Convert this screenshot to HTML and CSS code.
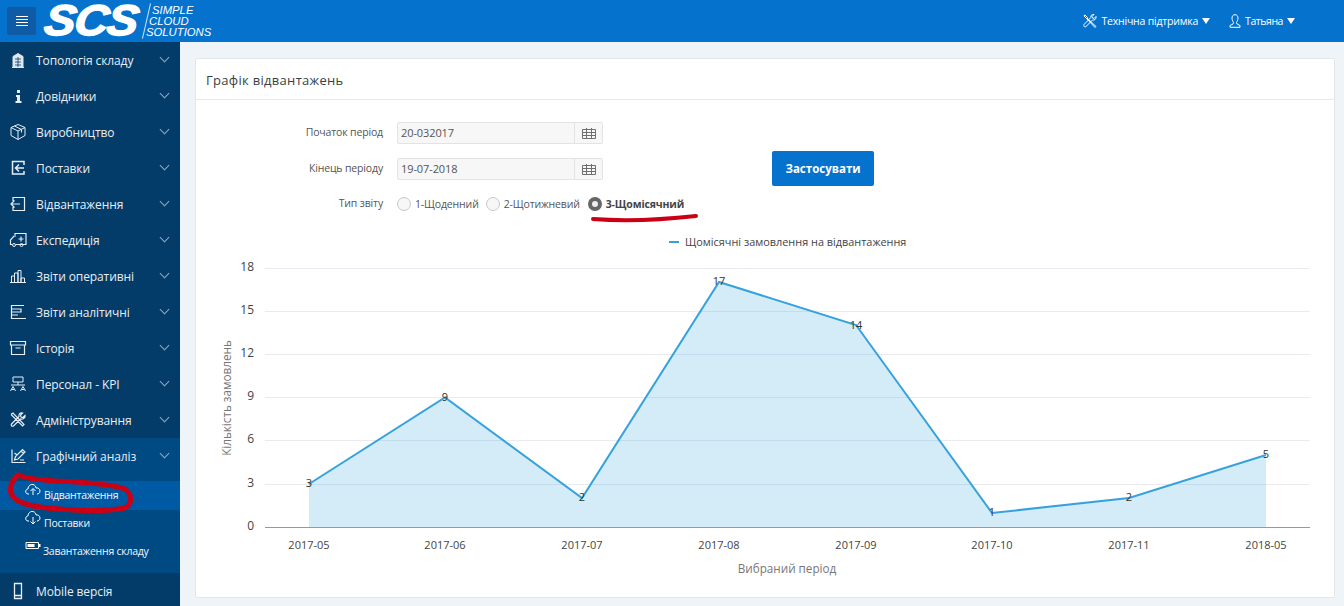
FILE: index.html
```html
<!doctype html>
<html lang="uk">
<head>
  <meta charset="UTF-8">
  <title>Графік відвантажень</title>
  <link rel="stylesheet" href="styles.css">
</head>
<body>
<header class="top-bar">
  <button class="menu-toggle" type="button" aria-label="Меню">
    <svg width="12" height="10" viewBox="0 0 12 10"><path d="M0 .5h12M0 3.5h12M0 6.5h12M0 9.5h12" stroke="#fff" fill="none"/></svg>
  </button>
  <div class="logo">
    <span class="logo-mark">SCS</span>
    <span class="logo-slash"></span>
    <span class="logo-text">
      <span class="logo-line-1">SIMPLE</span>
      <span class="logo-line-2">CLOUD</span>
      <span class="logo-line-3">SOLUTIONS</span>
    </span>
  </div>
  <nav class="top-links">
    <a class="top-link">
      <svg class="top-icon" width="14" height="14" viewBox="0 0 14 14"><path d="M1 1.500l1-.5 2.500 2.500-1 1L1 2zM4 4l9 8.500-1 1L3.500 4.500M13 2.500l-2 2-1.500-.5-.5-1.500 2-2C9 .2 7.500 1.500 7.800 3.500L1 10.500c-.5 1 0 2.500 1.500 2.500L9.500 6c2 .5 4-1 3.500-3.500z" stroke="#fff" fill="none"/></svg>
      Технічна підтримка <span class="caret"></span>
    </a>
    <a class="top-link top-link-user">
      <svg class="top-icon" width="12" height="14" viewBox="0 0 12 14"><path d="M6 .7c2 0 3 1.500 3 3.500S8 7.500 7.500 8.500l.5 1.500 3 1.500v1.800H1v-1.800L4 10l.5-1.500C4 7.500 3 6.200 3 4.200S4 .7 6 .7z" stroke="#fff" fill="none"/></svg>
      Татьяна <span class="caret"></span>
    </a>
  </nav>
</header>

<div class="layout">
  <aside class="sidebar">
    <a class="nav-item">
      <svg class="nav-icon" viewBox="0 0 18 18"><path d="M4 16V5.500l5-3 5 3V16zM3 16.500h12" fill="#dfe7ee" stroke="#dfe7ee"/><path d="M6 8h6M6 11h6M6 14h6M9 6v10" stroke="#033c69" stroke-width=".8" fill="none"/></svg>
      <span class="nav-label">Топологія складу</span><span class="chevron"></span>
    </a>
    <a class="nav-item">
      <svg class="nav-icon" viewBox="0 0 18 18"><path d="M8 3h3v3H8zM7 8h4v6h1.500v2h-6v-2H8v-4H7z" fill="#e8eef4"/></svg>
      <span class="nav-label">Довідники</span><span class="chevron"></span>
    </a>
    <a class="nav-item">
      <svg class="nav-icon" viewBox="0 0 18 18"><path d="M9 1.500l7 3v8l-7 4-7-4v-8zM2 4.500l7 3.500 7-3.500M9 8v8.500M5.500 3l7 3.500v3" stroke="#e8eef4" fill="none"/></svg>
      <span class="nav-label">Виробництво</span><span class="chevron"></span>
    </a>
    <a class="nav-item">
      <svg class="nav-icon" viewBox="0 0 18 18"><path d="M15 6V2.500H3.500v12.500H15v-3M15 9H7M10 5.500L6.500 9l3.500 3.500" stroke="#e8eef4" stroke-width="1.500" fill="none"/></svg>
      <span class="nav-label">Поставки</span><span class="chevron"></span>
    </a>
    <a class="nav-item">
      <svg class="nav-icon" viewBox="0 0 18 18"><path d="M4 6V2.500h11.500v13H4v-3.500M11 9H2M5.500 5.500L2 9l3.500 3.500" stroke="#e8eef4" stroke-width="1.200" fill="none"/></svg>
      <span class="nav-label">Відвантаження</span><span class="chevron"></span>
    </a>
    <a class="nav-item">
      <svg class="nav-icon" viewBox="0 0 18 18"><path d="M6 4V2.500h11v11H7M3 13.500H1.500V9L5 5h2M9.500 8h5M12 5.500v5" stroke="#e8eef4" stroke-width="1.200" fill="none"/><circle cx="5" cy="14" r="1.500" stroke="#e8eef4" fill="none"/><circle cx="12.500" cy="14" r="1.500" stroke="#e8eef4" fill="none"/></svg>
      <span class="nav-label">Експедиція</span><span class="chevron"></span>
    </a>
    <a class="nav-item">
      <svg class="nav-icon" viewBox="0 0 18 18"><path d="M2.500 15V9h3v6M5.500 15V6h3.500v9M9 15V3.500h3V15M12 15v-4h3.500v4M1 15.500h16" stroke="#e8eef4" fill="none"/></svg>
      <span class="nav-label">Звіти оперативні</span><span class="chevron"></span>
    </a>
    <a class="nav-item">
      <svg class="nav-icon" viewBox="0 0 18 18"><path d="M2.500 16V2.500H15M3 6h9v3H3M3 12h6M3 15.500h14" stroke="#e8eef4" stroke-width="1.200" fill="none"/></svg>
      <span class="nav-label">Звіти аналітичні</span><span class="chevron"></span>
    </a>
    <a class="nav-item">
      <svg class="nav-icon" viewBox="0 0 18 18"><path d="M1.500 2.500h15v3.500h-15zM2.500 6v9.500h13V6M6.500 9h5" stroke="#e8eef4" stroke-width="1.200" fill="none"/></svg>
      <span class="nav-label">Історія</span><span class="chevron"></span>
    </a>
    <a class="nav-item">
      <svg class="nav-icon" viewBox="0 0 18 18"><path d="M4 2h10v5H4zM2 10h14M1.500 16l2.500-4.500L6.500 16M3 14.500h2M11.500 16l2.500-4.500 2.500 4.500M13 14.500h2M9 7v3" stroke="#e8eef4" fill="none"/></svg>
      <span class="nav-label">Персонал - KPI</span><span class="chevron"></span>
    </a>
    <a class="nav-item">
      <svg class="nav-icon" viewBox="0 0 18 18"><path d="M2.500 3L4 2l11 11.500-1.500 1.500L2.500 4zM16 4.500l-2 2-2-.5-.5-2 2-2c-2.500-.5-4 1-3.500 3.500L2.500 13c-.8 1.200.3 2.800 2 2l7-7c2.500.5 5-1 4.500-3.500z" stroke="#e8eef4" stroke-width="1.200" fill="none"/></svg>
      <span class="nav-label">Адміністрування</span><span class="chevron"></span>
    </a>
    <div class="nav-group">
      <a class="nav-item">
        <svg class="nav-icon" viewBox="0 0 18 18"><path d="M3 2.500v13h13.500M5.500 13l1-3.500 7-7 2.500 2.500-7 7zM12 4l2.500 2.500M5.500 6L8 8M11 13l4-.0" stroke="#e8eef4" stroke-width="1.200" fill="none"/></svg>
        <span class="nav-label">Графічний аналіз</span><span class="chevron"></span>
      </a>
      <ul class="sub-nav">
        <li class="sub-item sub-item-active">
          <svg class="sub-icon" viewBox="0 0 16 14"><path d="M4 11H3C1 11 .5 9 .8 8 1 6.500 2 6 3 6c0-3 2.500-5 5-4.500C10 2 11 3.500 11 5c2-.5 4 1 4 3s-1.500 3-3 3M8 12V6M5.500 8L8 5.500 10.500 8" stroke="#fff" fill="none"/></svg>
          <span>Відвантаження</span>
        </li>
        <li class="sub-item">
          <svg class="sub-icon" viewBox="0 0 16 14"><path d="M4 10H3C1 10 .5 8 .8 7 1 5.500 2 5 3 5c0-3 2.500-5 5-4.500C10 1 11 2.500 11 4c2-.5 4 1 4 3s-1.500 3-3 3M8 6v7M5.500 10.500L8 13l2.500-2.500" stroke="#fff" fill="none"/></svg>
          <span>Поставки</span>
        </li>
        <li class="sub-item">
          <svg class="sub-icon" viewBox="0 0 16 14"><path d="M1 3.500h12.500v6H1z" stroke="#fff" fill="none"/><path d="M2.500 5h7v3h-7zM14 5h1.500v3H14z" fill="#fff"/></svg>
          <span>Завантаження складу</span>
        </li>
      </ul>
    </div>
    <a class="nav-item">
      <svg class="nav-icon" viewBox="0 0 18 18"><path d="M5.500 1.500h7v15h-7zM6 13.500h6" stroke="#e8eef4" stroke-width="1.300" fill="none"/></svg>
      <span class="nav-label">Mobile версія</span>
    </a>
  </aside>

  <main class="content">
    <section class="card">
      <h1 class="card-title">Графік відвантажень</h1>
      <div class="card-body">
        <div class="filter">
          <form class="filter-form">
            <label class="filter-label">Початок період</label>
            <div class="date-field">
              <span class="date-input">20-032017</span>
              <span class="date-addon">
                <svg width="14" height="12" viewBox="0 0 14 12"><path d="M.5 2.500h13v9H.5zM.5 5.500h13M.5 8.500h13M4.500 1v10.500M9.500 1v10.500" stroke="#6f6f6f" fill="none"/></svg>
              </span>
            </div>
            <label class="filter-label">Кінець періоду</label>
            <div class="date-field">
              <span class="date-input">19-07-2018</span>
              <span class="date-addon">
                <svg width="14" height="12" viewBox="0 0 14 12"><path d="M.5 2.500h13v9H.5zM.5 5.500h13M.5 8.500h13M4.500 1v10.500M9.500 1v10.500" stroke="#6f6f6f" fill="none"/></svg>
              </span>
            </div>
            <label class="filter-label">Тип звіту</label>
            <div class="radio-row">
              <span class="radio"><i class="radio-dot"></i>1-Щоденний</span>
              <span class="radio"><i class="radio-dot"></i>2-Щотижневий</span>
              <span class="radio radio-checked"><i class="radio-dot"></i>3-Щомісячний</span>
            </div>
          </form>
          <button class="apply-btn" type="button">Застосувати</button>
        </div>

        <svg class="chart" viewBox="196 230 1138 367" width="1138" height="367">
          <path d="M669 242h10" stroke="#36a2dd" stroke-width="2"/>
          <text x="685" y="246" class="chart-legend">Щомісячні замовлення на відвантаження</text>

          <path d="M265 268.500h1045M265 311.500h1045M265 354.500h1045M265 397.500h1045M265 440.500h1045M265 484.500h1045" stroke="#e9ebf1"/>
          <path d="M309 484L445 397.500 582 498 719 282 856 325 992 513 1129 498 1266 455V527H309z" fill="#36a2dd" fill-opacity=".21"/>
          <path d="M309 484L445 397.500 582 498 719 282 856 325 992 513 1129 498 1266 455" fill="none" stroke="#36a2dd" stroke-width="2"/>
          <path d="M265 527.500h1045" stroke="#999"/>

          <g class="chart-axis-y">
            <text x="254" y="271">18</text>
            <text x="254" y="314">15</text>
            <text x="254" y="357">12</text>
            <text x="254" y="400">9</text>
            <text x="254" y="443">6</text>
            <text x="254" y="487">3</text>
            <text x="254" y="530">0</text>
          </g>
          <g class="chart-axis-x">
            <text x="309" y="549">2017-05</text>
            <text x="445" y="549">2017-06</text>
            <text x="582" y="549">2017-07</text>
            <text x="719" y="549">2017-08</text>
            <text x="856" y="549">2017-09</text>
            <text x="992" y="549">2017-10</text>
            <text x="1129" y="549">2017-11</text>
            <text x="1266" y="549">2018-05</text>
          </g>
          <g class="chart-values">
            <text x="309" y="487">3</text>
            <text x="445" y="401">9</text>
            <text x="582" y="501">2</text>
            <text x="719" y="285">17</text>
            <text x="856" y="329">14</text>
            <text x="992" y="516">1</text>
            <text x="1129" y="501">2</text>
            <text x="1266" y="458">5</text>
          </g>
          <text class="chart-title" x="787" y="573">Вибраний період</text>
          <text class="chart-title" transform="translate(231 398) rotate(-90)">Кількість замовлень</text>
        </svg>
      </div>
    </section>
  </main>
</div>

<svg class="marks" width="1344" height="606" viewBox="0 0 1344 606">
  <path d="M18 475C10 482 8 492 14 498 22 505 40 508 60 509 85 511 110 511 125 508 133 503 132 494 125 489 112 484 80 482 55 481 40 480 28 479 18 475z" fill="none" stroke="#cc0014" stroke-width="5"/>
  <path d="M593 219C620 221 660 220 696 216" fill="none" stroke="#cc0014" stroke-width="4" stroke-linecap="round"/>
</svg>
</body>
</html>
```

FILE: styles.css
```css
* {
  box-sizing: border-box;
}

html,
body {
  height: 100%;
}

body {
  margin: 0;
  overflow: hidden;
  font-family: "Open Sans", "Noto Sans", sans-serif;
  font-size: 12px;
  color: #444;
  background: #eff4f9;
}

/* top bar */
.top-bar {
  display: flex;
  align-items: center;
  height: 42px;
  padding: 0 49px 0 7px;
  background: #0572ce;
  color: #fff;
}

.menu-toggle {
  display: flex;
  align-items: center;
  justify-content: center;
  width: 29px;
  height: 28px;
  padding: 0;
  border: 0;
  border-radius: 2px;
  background: #0f5ba5;
}

.logo {
  display: flex;
  align-items: center;
  height: 42px;
  margin-left: 7px;
}

.logo-mark {
  display: block;
  width: 96px;
  font-family: "Liberation Sans", sans-serif;
  font-size: 36px;
  font-weight: 700;
  font-style: italic;
  line-height: 42px;
  letter-spacing: -1px;
  -webkit-text-stroke: 1.2px #fff;
  transform: translateX(2px) scale(1.3, 1.19) skewX(-8deg);
  transform-origin: left center;
}

.logo-slash {
  display: block;
  width: 1px;
  height: 36px;
  margin-left: 7px;
  background: #cfe3f5;
  transform: rotate(13deg);
}

.logo-text {
  display: flex;
  flex-direction: column;
  margin-left: -1px;
  font-family: "Liberation Sans", sans-serif;
  font-size: 11.300px;
  font-style: italic;
  line-height: 11px;
}

.logo-line-1 {
  padding-left: 6px;
}

.logo-line-2 {
  padding-left: 3px;
}

.top-links {
  display: flex;
  margin-left: auto;
  font-size: 10.500px;
  letter-spacing: -.2px;
}

.top-link {
  display: flex;
  align-items: center;
  gap: 4px;
}

.top-link-user {
  margin-left: 19px;
  letter-spacing: -.45px;
}

.caret {
  width: 0;
  height: 0;
  border-left: 4px solid transparent;
  border-right: 4px solid transparent;
  border-top: 6px solid #fff;
}

/* sidebar */
.layout {
  display: flex;
  height: 564px;
}

.sidebar {
  flex: none;
  width: 180px;
  background: #033c69;
  color: #e8eef4;
}

.nav-item {
  display: flex;
  align-items: center;
  height: 36px;
  padding: 0 9px 0 9px;
  font-size: 12px;
  font-weight: 500;
  letter-spacing: -.1px;
}

.nav-icon {
  flex: none;
  width: 18px;
  height: 18px;
  margin-right: 9px;
}

.nav-label {
  flex: 1;
  white-space: nowrap;
}

.chevron {
  width: 7px;
  height: 7px;
  margin: -5px 3px 0 0;
  border-right: 1.500px solid #8fa9c0;
  border-bottom: 1.500px solid #8fa9c0;
  transform: rotate(45deg);
}

.nav-group {
  height: 135px;
  background: #004a84;
}

.sub-nav {
  margin: 7px 0 0;
  padding: 0;
  list-style: none;
}

.sub-item {
  display: flex;
  align-items: flex-end;
  height: 28px;
  padding: 0 0 8px 25px;
  font-size: 10.500px;
  font-weight: 500;
  letter-spacing: -.25px;
  color: #f2f6fa;
}

.sub-item-active {
  height: 29px;
  background: #0059a3;
}

.sub-icon {
  flex: none;
  width: 16px;
  height: 14px;
  margin: 0 3px 5px 0;
}

.sub-item:last-child .sub-icon {
  margin-right: 2px;
}

/* card */
.content {
  flex: 1;
  min-width: 0;
  padding: 16px 9px 8px 15px;
}

.card {
  height: 540px;
  border: 1px solid #e4e7ea;
  border-radius: 2px;
  background: #fff;
}

.card-title {
  height: 41px;
  margin: 0;
  padding: 0 10px;
  border-bottom: 1px solid #e8e9ec;
  font-size: 13px;
  font-weight: 400;
  line-height: 43px;
  letter-spacing: .3px;
  color: #3a3f45;
}

.filter {
  display: flex;
  height: 130px;
}

.filter-form {
  display: grid;
  grid-template-columns: 187px 1fr;
  grid-template-rows: 22px 22px 20px;
  row-gap: 14px;
  column-gap: 14px;
  width: 576px;
  padding-top: 22px;
  box-sizing: content-box;
}

.filter-label {
  align-self: center;
  padding-bottom: 2px;
  text-align: right;
  font-size: 10.500px;
  letter-spacing: -.15px;
  color: #555;
}

.date-field {
  display: flex;
  width: 206px;
  height: 22px;
}

.date-input {
  width: 178px;
  padding: 0 3px;
  border: 1px solid #e1e3e6;
  border-radius: 2px 0 0 2px;
  background: #f7f7f7;
  font-size: 11px;
  line-height: 20px;
  letter-spacing: -.1px;
  color: #555;
}

.date-addon {
  display: flex;
  align-items: center;
  justify-content: center;
  width: 28px;
  border: 1px solid #e1e3e6;
  border-left: 0;
  border-radius: 0 2px 2px 0;
  background: #f7f7f7;
}

.radio-row {
  display: flex;
  align-items: center;
  font-size: 10.500px;
  letter-spacing: -.15px;
  color: #555;
}

.radio {
  display: flex;
  align-items: center;
  gap: 4px;
  margin-right: 8px;
  white-space: nowrap;
}

.radio:first-child {
  margin-right: 7px;
}

.radio-dot {
  display: block;
  width: 14px;
  height: 14px;
  border: 1px solid #c8c8c8;
  border-radius: 50%;
  background: #f7f7f7;
}

.radio-checked {
  font-weight: 700;
  color: #444;
}

.radio-checked .radio-dot {
  border: 4px solid #666;
  background: #eee;
}

.apply-btn {
  width: 102px;
  height: 35px;
  margin: 51px 0 0;
  border: 0;
  border-radius: 2px;
  background: #0572ce;
  font-family: inherit;
  font-size: 11.500px;
  font-weight: 700;
  color: #fff;
}

/* chart */
.chart {
  display: block;
}

.chart text {
  font-family: "Open Sans", "Noto Sans", sans-serif;
}

.chart-legend {
  font-size: 10.900px;
  fill: #444;
}

.chart-axis-y text {
  font-size: 12px;
  text-anchor: end;
  fill: #444;
}

.chart-axis-x text {
  font-size: 11px;
  text-anchor: middle;
  fill: #444;
}

.chart-values text {
  font-size: 11px;
  text-anchor: middle;
  fill: #333;
}

.chart-title {
  font-size: 11.700px;
  text-anchor: middle;
  fill: #777;
}

/* hand drawn red marks on top of the screenshot */
.marks {
  position: absolute;
  top: 0;
  left: 0;
  pointer-events: none;
}
```
